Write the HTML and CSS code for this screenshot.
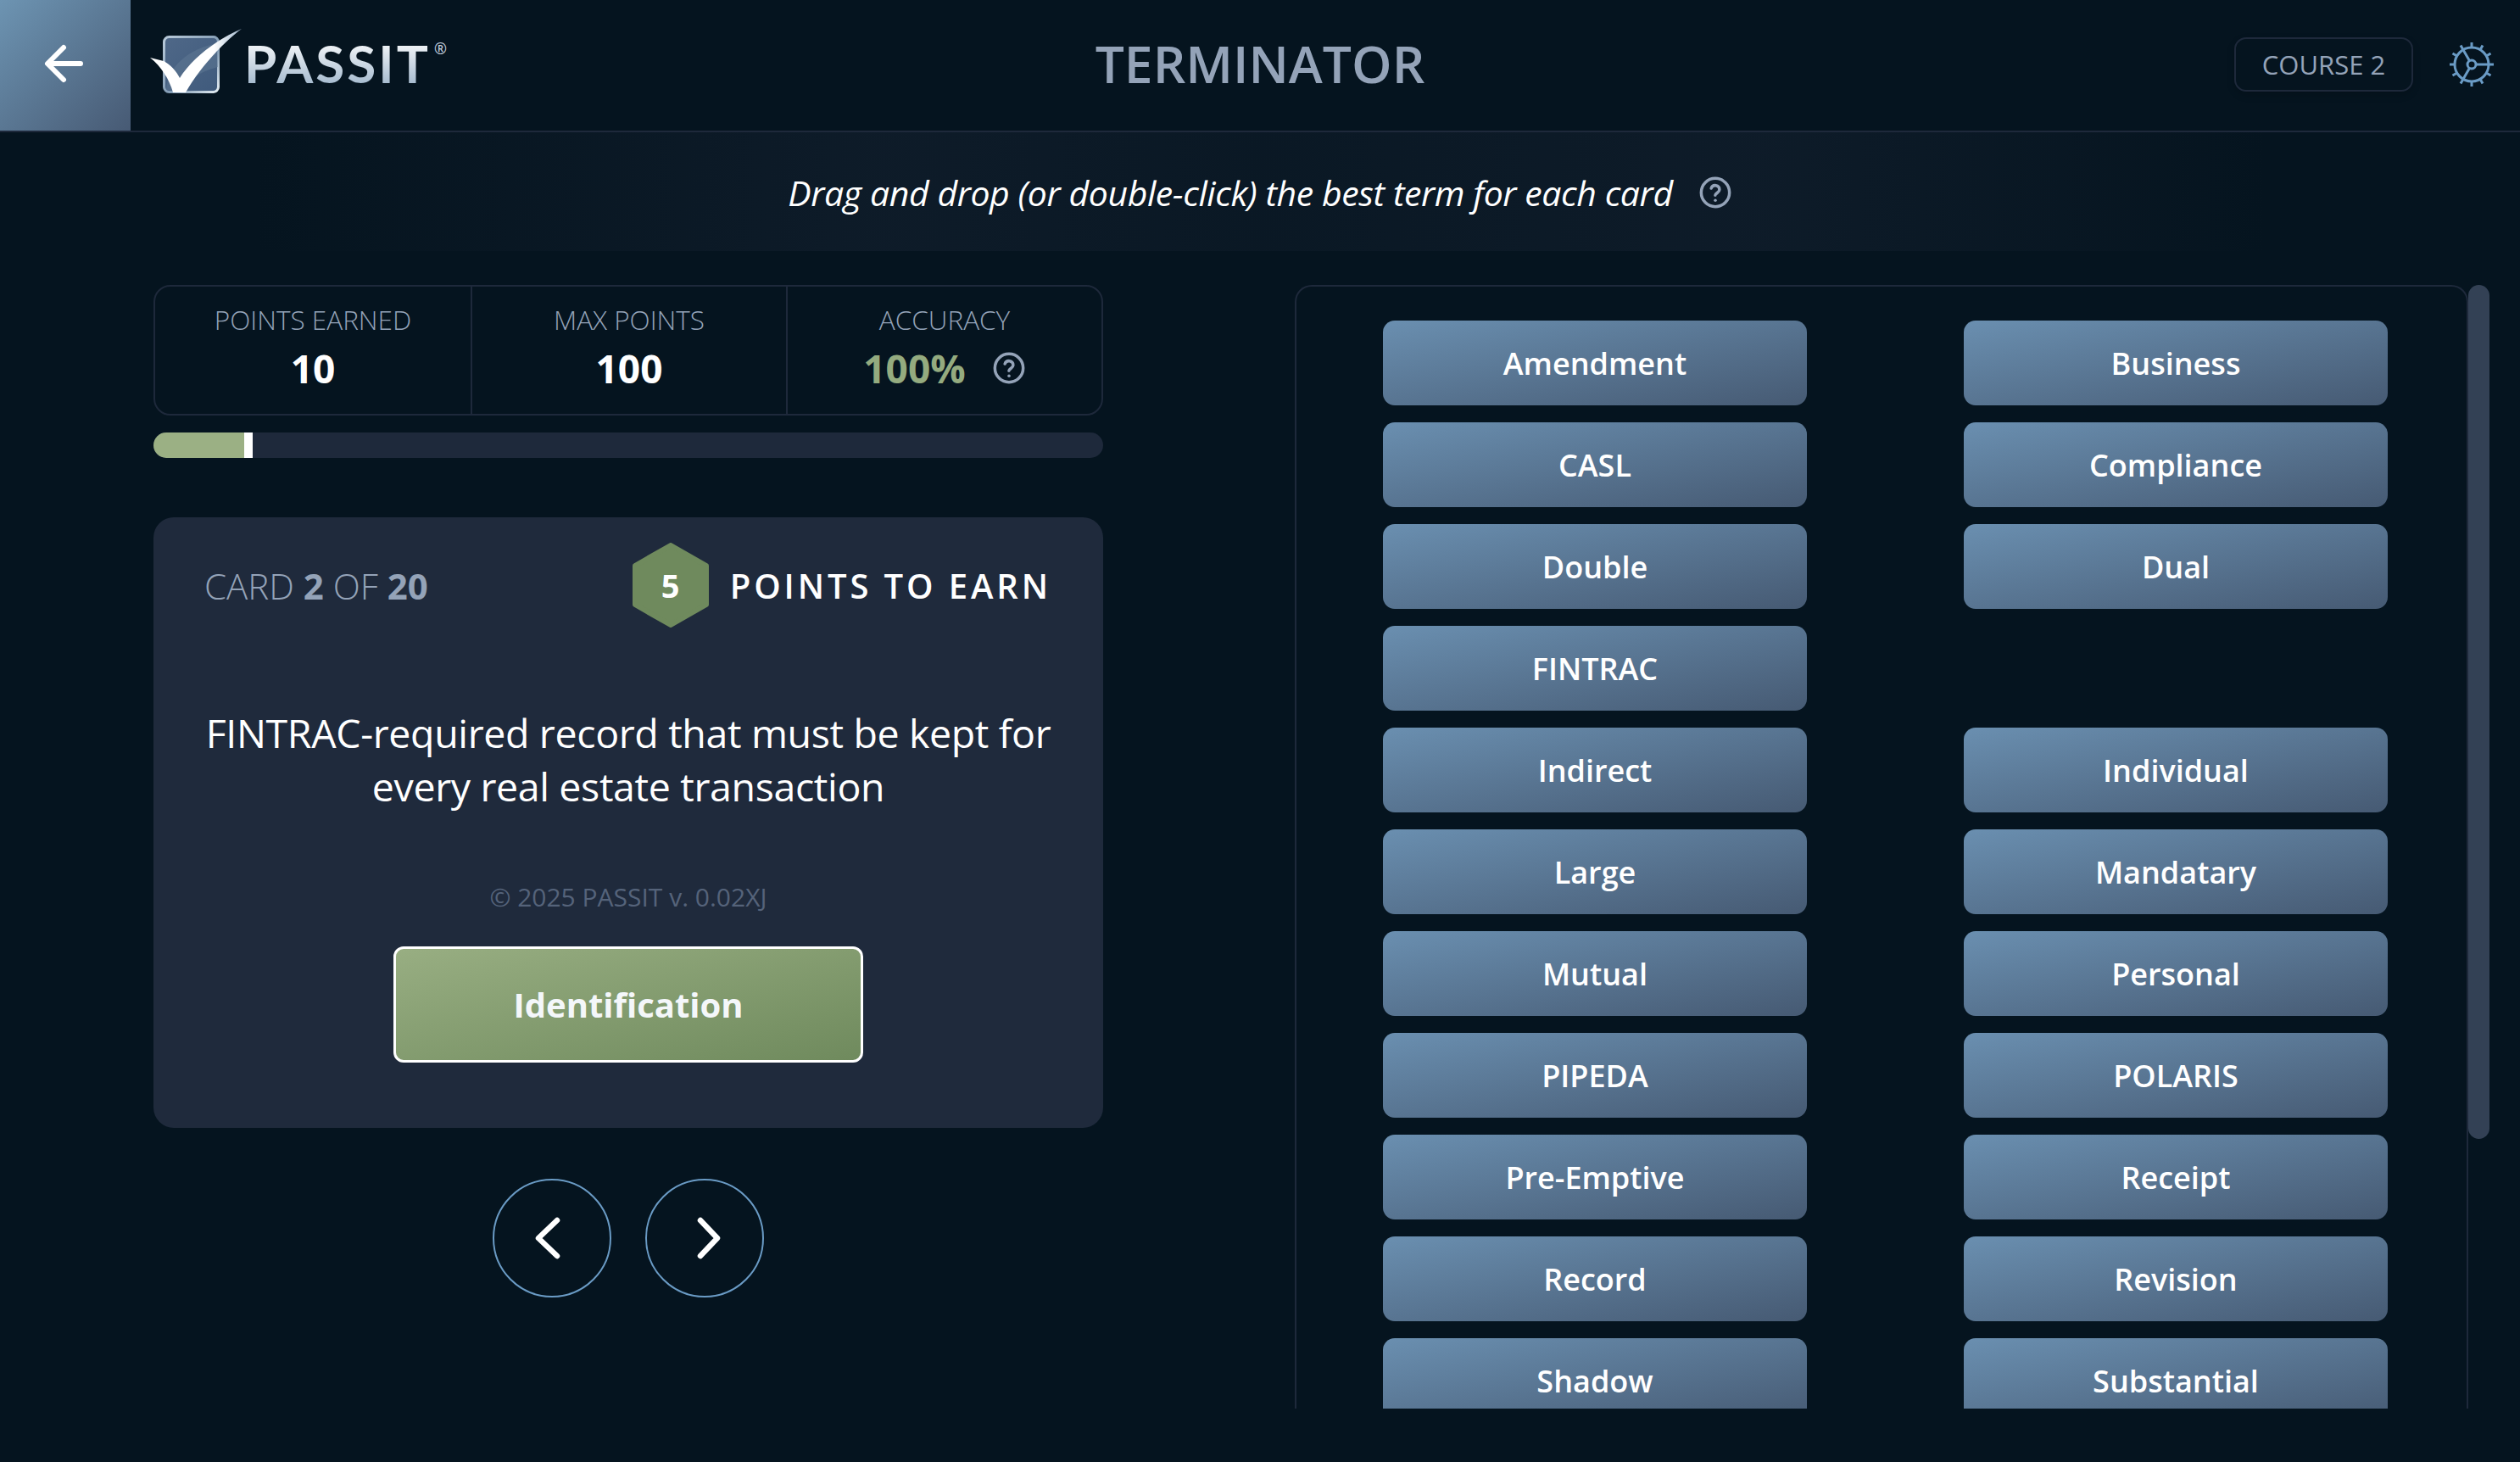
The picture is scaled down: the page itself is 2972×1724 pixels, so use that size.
FILE: index.html
```html
<!DOCTYPE html>
<html lang="en">
<head>
<meta charset="utf-8">
<title>PASSIT Terminator</title>
<link rel="stylesheet" href="styles.css">
</head>
<body>
<div class="app">
  <header class="topbar">
    <div class="brand">
      <a class="back">
        <svg class="back-icon" viewBox="0 0 48 48"><path d="M44 24H6M24 5 5 24l19 19"/></svg>
      </a>
      <div class="logo">
        <svg class="logo-mark" viewBox="0 0 110 80">
          <defs>
            <linearGradient id="boxFill" x1="0" y1="0" x2="1" y2="1"><stop offset="0" stop-color="#4f6888"/><stop offset="1" stop-color="#3f5a7c"/></linearGradient>
            <linearGradient id="boxEdge" x1="0" y1="0" x2="1" y2="1"><stop offset="0" stop-color="#b9cad9"/><stop offset=".6" stop-color="#7f99b2"/><stop offset="1" stop-color="#e4edf3"/></linearGradient>
            <linearGradient id="checkFill" x1="0" y1="0" x2="1" y2="0"><stop offset="0" stop-color="#fff"/><stop offset=".7" stop-color="#fff"/><stop offset="1" stop-color="#9fb6cc"/></linearGradient>
          </defs>
          <rect x="17.500" y="9.500" width="64" height="65" rx="6" fill="url(#boxFill)" stroke="url(#boxEdge)" stroke-width="3"/>
          <path d="M20 72C22 44 46 24 80 17L81 45C60 50 46 60 37 74Z" fill="#5f7894" opacity=".55"/>
          <path d="M1 34 17 38C25 42 32 50 36 58 50 35 80 12 109 0 86 17 58 48 43 75H28C24 60 14 44 1 34Z" fill="url(#checkFill)"/>
        </svg>
        <span class="logo-word">PASSIT</span><span class="logo-reg">®</span>
      </div>
    </div>
    <h1 class="title">TERMINATOR</h1>
    <div class="top-right">
      <span class="course">COURSE 2</span>
      <svg class="gear" viewBox="0 0 54 54">
        <circle cx="27" cy="27" r="20"/>
        <circle cx="27" cy="27" r="5"/>
        <path d="M32 27H47M24.500 22.700 17 9.700M24.500 31.300 17 44.300"/>
        <path d="M27 1v6M27 47v6M1 27h6M47 27h6M14 4.500l3 5.200M37 44.300l3 5.200M4.500 14l5.200 3M44.300 37l5.200 3M4.500 40l5.200-3M44.300 17l5.200-3M14 49.500l3-5.200M37 9.700l3-5.200"/>
      </svg>
    </div>
  </header>

  <div class="hint">
    <p class="hint-text">Drag and drop (or double-click) the best term for each card</p>
    <svg class="help" viewBox="0 0 24 24"><circle cx="12" cy="12" r="10"/><path d="M9.090 9a3 3 0 0 1 5.830 1c0 2-3 2.500-3 4"/><path d="M12 17.500h.01"/></svg>
  </div>

  <main class="main">
    <section class="left">
      <div class="stats">
        <div class="stat">
          <span class="stat-label">POINTS EARNED</span>
          <span class="stat-value">10</span>
        </div>
        <div class="stat">
          <span class="stat-label">MAX POINTS</span>
          <span class="stat-value">100</span>
        </div>
        <div class="stat">
          <span class="stat-label">ACCURACY</span>
          <span class="stat-value accuracy">100%
            <svg class="help" viewBox="0 0 24 24"><circle cx="12" cy="12" r="10"/><path d="M9.090 9a3 3 0 0 1 5.830 1c0 2-3 2.500-3 4"/><path d="M12 17.500h.01"/></svg>
          </span>
        </div>
      </div>
      <div class="progress"><div class="progress-fill"></div><div class="progress-mark"></div></div>

      <article class="card">
        <div class="card-head">
          <span class="card-count">CARD <b>2</b> OF <b>20</b></span>
          <div class="earn">
            <span class="hex">
              <svg class="hex-shape" viewBox="0 0 90 100"><path d="M45 3 87 27V73L45 97 3 73V27Z"/></svg>
              <span class="hex-num">5</span>
            </span>
            <span class="earn-text">POINTS TO EARN</span>
          </div>
        </div>
        <p class="question">FINTRAC-required record that must be kept for every real estate transaction</p>
        <p class="copy">© 2025 PASSIT v. 0.02XJ</p>
        <button class="answer">Identification</button>
      </article>

      <div class="nav">
        <button class="nav-btn"><svg viewBox="0 0 140 140"><path d="M76 49 54 70l22 21"/></svg></button>
        <button class="nav-btn"><svg viewBox="0 0 140 140"><path d="M65 49l20 21-20 21"/></svg></button>
      </div>
    </section>

    <section class="right">
      <div class="panel">
        <div class="terms">
          <button class="term">Amendment</button>
          <button class="term">Business</button>
          <button class="term">CASL</button>
          <button class="term">Compliance</button>
          <button class="term">Double</button>
          <button class="term">Dual</button>
          <button class="term">FINTRAC</button>
          <div class="term-empty"></div>
          <button class="term">Indirect</button>
          <button class="term">Individual</button>
          <button class="term">Large</button>
          <button class="term">Mandatary</button>
          <button class="term">Mutual</button>
          <button class="term">Personal</button>
          <button class="term">PIPEDA</button>
          <button class="term">POLARIS</button>
          <button class="term">Pre-Emptive</button>
          <button class="term">Receipt</button>
          <button class="term">Record</button>
          <button class="term">Revision</button>
          <button class="term">Shadow</button>
          <button class="term">Substantial</button>
        </div>
      </div>
      <div class="thumb"></div>
    </section>
  </main>
</div>
</body>
</html>
```
FILE: styles.css
```css
* { box-sizing: border-box; }
html, body { margin: 0; padding: 0; background: #05141f; }
body { font-family: "Open Sans", "Noto Sans", sans-serif; color: #fff; }
button { font-family: inherit; cursor: pointer; }
p, h1 { margin: 0; }

.app { width: 2972px; height: 1724px; overflow: hidden; display: flex; flex-direction: column; }

.topbar {
  height: 156px; flex: none;
  display: grid; grid-template-columns: 1fr auto 1fr; align-items: center;
  border-bottom: 2px solid #1e293b;
}
.brand { display: flex; align-items: center; height: 154px; }
.back {
  width: 154px; height: 154px; flex: none;
  display: flex; align-items: center; justify-content: center;
  padding: 0 4px 4px 0;
  background: linear-gradient(to bottom right, #6d94b2, #475a74);
}
.back-icon { width: 48px; height: 48px; fill: none; stroke: #fff; stroke-width: 6; stroke-linecap: round; stroke-linejoin: round; }
.logo { display: flex; align-items: flex-start; margin-left: 22px; height: 80px; margin-top: -7px; }
.logo-mark { width: 110px; height: 80px; flex: none; }
.logo-word {
  font-family: "Lato", "Open Sans", sans-serif; font-weight: 700; font-size: 62px; line-height: 1;
  margin-left: 2px; margin-top: 9px; letter-spacing: 3px;
  background: linear-gradient(to bottom, #ffffff, #9db4ca);
  -webkit-background-clip: text; background-clip: text; color: transparent;
}
.logo-reg { font-size: 18px; line-height: 1; margin: 14px 0 0 4px; color: #c8d5e0; }

.title { font-size: 60.500px; line-height: 1; font-weight: 600; color: #94a3b8; margin-top: -3px; }

.top-right { display: flex; align-items: center; justify-content: flex-end; gap: 42px; padding-right: 30px; margin-top: -2px; }
.course {
  height: 64px; width: 211px;
  display: flex; align-items: center; justify-content: center;
  border: 2px solid #1e293b; border-radius: 14px;
  font-size: 31px; font-weight: 500; color: #94a3b8;
  box-shadow: 0 4px 10px rgba(0,0,0,.15);
}
.gear { width: 54px; height: 54px; fill: none; stroke: #6a9bc5; stroke-width: 3; stroke-linecap: butt; flex: none; }

.hint {
  height: 140px; flex: none;
  display: flex; align-items: center; justify-content: center; gap: 30px;
  padding-top: 2px;
  background: linear-gradient(90deg, rgba(30,41,59,0) 10%, rgba(30,41,59,.35) 35%, rgba(30,41,59,.2) 50%, rgba(30,41,59,.35) 70%, rgba(30,41,59,0) 90%);
}
.hint-text { font-style: italic; font-size: 41px; line-height: 60px; letter-spacing: -0.42px; }
.help { width: 40px; height: 40px; flex: none; fill: none; stroke: #94a3b8; stroke-width: 2.100; stroke-linecap: round; stroke-linejoin: round; }

.main { flex: 1; min-height: 0; display: flex; padding: 40px 36px 63px 181px; gap: 226px; }
.left { width: 1120px; flex: none; }

.stats { display: grid; grid-template-columns: repeat(3, 1fr); height: 154px; border: 2px solid #1e293b; border-radius: 20px; }
.stat { display: flex; flex-direction: column; align-items: center; padding-top: 18px; }
.stat + .stat { border-left: 2px solid #1e293b; }
.stat-label { font-size: 31.500px; line-height: 42px; font-weight: 300; color: #94a3b8; }
.stat-value { font-size: 46px; line-height: 62px; font-weight: 700; color: #fff; margin-top: 5px; display: flex; align-items: center; }
.accuracy { color: #94ab7f; gap: 31px; }

.progress { display: flex; height: 30px; margin-top: 20px; background: #1e293b; border-radius: 15px; overflow: hidden; }
.progress-fill { width: 107px; background: #9bb084; }
.progress-mark { width: 10px; background: #fff; }

.card { height: 720px; margin-top: 70px; background: #1f2a3c; border-radius: 24px; padding: 30px 60px 0; display: flex; flex-direction: column; align-items: center; }
.card-head { align-self: stretch; display: flex; align-items: center; justify-content: space-between; height: 100px; }
.card-count { font-size: 42px; font-weight: 300; color: #94a3b8; }
.card-count b { font-weight: 700; }
.earn { display: flex; align-items: center; gap: 25px; margin-right: 1px; }
.hex { position: relative; width: 90px; height: 100px; display: flex; align-items: center; justify-content: center; }
.hex-shape { position: absolute; inset: 0; width: 90px; height: 100px; fill: #6f8a5d; stroke: #6f8a5d; stroke-width: 6; stroke-linejoin: round; }
.hex-num { position: relative; font-size: 38px; font-weight: 700; line-height: 1; }
.earn-text { font-size: 40px; font-weight: 600; letter-spacing: 3.900px; color: #fff; white-space: nowrap; }
.question { flex: none; width: 1040px; margin: 93px -20px 0; font-size: 46.500px; line-height: 63px; font-weight: 500; letter-spacing: -0.37px; text-align: center; }
.copy { margin-top: 77px; font-size: 30px; line-height: 44px; font-weight: 400; color: #55637a; }
.answer {
  margin-top: 36px; width: 554px; height: 137px; flex: none;
  border: 3px solid #fff; border-radius: 12px;
  background: linear-gradient(to bottom right, #98ae82, #6f8a5d);
  color: #f4f7fa; font-size: 40px; font-weight: 700;
}

.nav { display: flex; justify-content: center; gap: 40px; margin-top: 60px; }
.nav-btn { width: 140px; height: 140px; padding: 0; border: 2px solid #6a9bc5; border-radius: 50%; background: transparent; display: flex; align-items: center; justify-content: center; }
.nav-btn svg { width: 140px; height: 140px; flex: none; fill: none; stroke: #fff; stroke-width: 6.500; stroke-linecap: round; stroke-linejoin: round; }

.right { flex: 1; min-width: 0; display: flex; align-items: flex-start; height: 100%; }
.panel { width: 1384px; height: 100%; overflow: hidden; border: 2px solid #1e293b; border-bottom: 0; border-radius: 20px 20px 0 0; padding: 40px 0 0 102px; }
.terms { display: grid; grid-template-columns: 500px 500px; column-gap: 185px; grid-auto-rows: 100px; row-gap: 20px; }
.term {
  border: 0; border-radius: 14px; color: #fff;
  font-size: 36px; font-weight: 600;
  background: linear-gradient(to bottom right, #6a8fb0, #465a73);
}
.thumb { width: 25px; height: 1007px; flex: none; background: #334155; border-radius: 13px; }
```
